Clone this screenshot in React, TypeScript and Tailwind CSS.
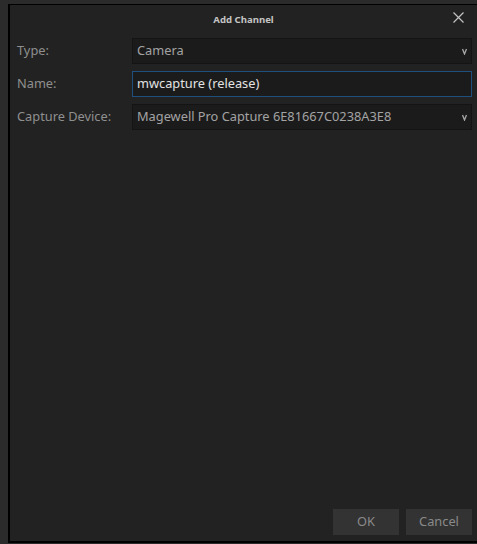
const font = { fontFamily: '"Noto Sans", "Open Sans", sans-serif' };

function Arrow() {
  return (
    <svg width="5" height="7" viewBox="0 0 5 7" className="shrink-0">
      <path d="M0.5 1 L2.5 6 L4.5 1" stroke="#a8a8a8" strokeWidth="1.3" fill="none" />
    </svg>
  );
}

function SelectBox({ value }: { value: string }) {
  return (
    <div className="flex-1 h-[26px] flex items-center justify-between pl-[4px] pr-[4px] bg-[#1b1b1b] border border-[#141414] text-[12.8px] text-[#a3a3a3]">
      <span>{value}</span>
      <Arrow />
    </div>
  );
}

export default function App() {
  return (
    <div className="w-[477px] h-[544px] bg-[#2b2b2b] pt-[4px] pl-[8px]" style={font}>
      <div className="w-[469px] h-[539px] bg-[#222222] border-t border-l-2 border-b-2 border-black flex flex-col">
        {/* Title bar */}
        <div className="h-[30px] flex items-center justify-center relative">
          <span className="text-[9.6px] font-bold text-[#c4c4c4]">Add Channel</span>
          <svg
            width="11"
            height="11"
            viewBox="0 0 11 11"
            className="absolute right-[13px] top-[7px]"
          >
            <path d="M0.5 0.5 L10.5 10.5 M10.5 0.5 L0.5 10.5" stroke="#c2c2c2" strokeWidth="1.2" />
          </svg>
        </div>

        {/* Form */}
        <div className="flex flex-col gap-[7px] pl-[7px] pr-[5px] mt-[3px]">
          <div className="flex items-center">
            <span className="w-[115px] text-[12.8px] text-[#8f8f8f]">Type:</span>
            <SelectBox value="Camera" />
          </div>
          <div className="flex items-center">
            <span className="w-[115px] text-[12.8px] text-[#8f8f8f]">Name:</span>
            <div className="flex-1 h-[26px] flex items-center pl-[4px] bg-[#1b1b1b] border border-[#1e4f7d] text-[12.8px] text-[#e2e2e2]">
              mwcapture (release)
            </div>
          </div>
          <div className="flex items-center">
            <span className="w-[115px] text-[12.8px] text-[#8f8f8f]">Capture Device:</span>
            <SelectBox value="Magewell Pro Capture 6E81667C0238A3E8" />
          </div>
        </div>

        <div className="flex-1" />

        {/* Buttons */}
        <div className="flex justify-end gap-[7px] pr-[5px] pb-[6px]">
          <button className="w-[66px] h-[26px] bg-[#333333] text-[12.8px] text-[#8a8a8a]">OK</button>
          <button className="w-[66px] h-[26px] bg-[#333333] text-[12.8px] text-[#8a8a8a]">Cancel</button>
        </div>
      </div>
    </div>
  );
}
